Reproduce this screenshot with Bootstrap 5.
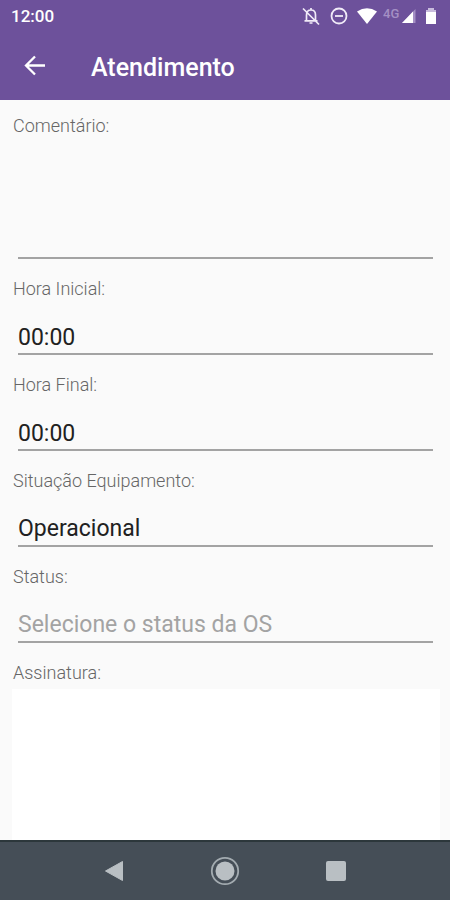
<!DOCTYPE html>
<html lang="pt-BR">
<head>
<meta charset="utf-8">
<meta name="viewport" content="width=device-width, initial-scale=1">
<title>Atendimento</title>
<link href="https://cdn.jsdelivr.net/npm/bootstrap@5.3.0/dist/css/bootstrap.min.css" rel="stylesheet">
<style>
body { font-family: Roboto, "Liberation Sans", sans-serif; background: #fafafa; color: #212121; }
.top-area { background: #6d519b; color: #fff; }
.status-bar { height: 32px; padding: 0 14px 0 11px; font-size: 17px; line-height: 32px; font-weight: 500; }
.status-icons { gap: 6px; }
.icon-set { gap: 9px; }
.app-bar { height: 68px; padding: 0 23px; gap: 44px; }
.app-title { font-size: 25px; line-height: 32px; font-weight: 500; padding-top: 3px; }
.form-area { padding: 14px 10px 0 12px; }
.field { margin-bottom: 18px; }
.field-label { font-size: 18px; line-height: 24px; font-weight: 300; color: #666; padding-left: 1px; }
.line-input, .line-input:focus {
  height: 54px; padding: 20px 0 0; font-size: 23px; line-height: 32px; color: #212121;
  background: transparent; border: 0; border-bottom: 2px solid #a3a3a3; border-radius: 0; box-shadow: none;
}
.line-wrap { padding: 0 7px 0 6px; }
textarea.line-input, textarea.line-input:focus { height: 121px; resize: none; }
select.line-input:invalid { color: #a3a3a3; }
.signature { background: #fff; margin-top: 4px; min-height: 151px; }
.nav-area { height: 60px; background: #454e57; border-top: 2px solid #2c373b; padding: 0 61px; }
</style>
<script src="https://cdn.jsdelivr.net/npm/bootstrap@5.3.0/dist/js/bootstrap.bundle.min.js"></script>
</head>
<body>
<div class="d-flex flex-column min-vh-100">
  <header class="top-area">
    <div class="status-bar d-flex justify-content-between align-items-center">
      <span>12:00</span>
      <div class="status-icons d-flex align-items-center">
        <div class="icon-set d-flex align-items-center">
          <svg width="20" height="20" viewBox="0 0 20 20" fill="none" stroke="#f1ebf8" stroke-width="1.7" aria-hidden="true">
            <path d="M5.500 14.500V9c0-3 1.700-5 4.500-5s4.500 2 4.500 5v5.500M3.500 14.800h13M10 2v2M8.500 17h3M2 2.500l16 16"/>
          </svg>
          <svg width="18" height="18" viewBox="0 0 18 18" fill="none" stroke="#f1ebf8" stroke-width="1.800" aria-hidden="true">
            <circle cx="9" cy="9" r="7.500"/><path d="M5 9h8"/>
          </svg>
          <svg width="20" height="16" viewBox="0 0 20 16" fill="#fff" aria-hidden="true">
            <path d="M0 3.500Q10-3 20 3.500L10 16z"/>
          </svg>
        </div>
        <div class="icon-set d-flex align-items-center">
          <div class="d-flex align-items-center">
            <svg width="18" height="18" viewBox="0 0 18 18" aria-hidden="true"><text x="0" y="11" font-size="13" fill="#a48fc4">4G</text></svg>
            <svg width="16" height="18" viewBox="0 0 16 18" aria-hidden="true">
              <path d="M14.500 2v14H1z" fill="#a48fc4"/><path d="M12 4.500V16H1z" fill="#fff"/>
            </svg>
          </div>
          <svg width="10" height="16" viewBox="0 0 10 16" aria-hidden="true">
            <path d="M2 0h6v2h2v14H0V2h2z" fill="#fff"/><path d="M2 0h6v2h2v2H0V2h2z" fill="#c9bcdd"/>
          </svg>
        </div>
      </div>
    </div>
    <div class="app-bar d-flex align-items-center">
      <button type="button" class="btn p-0 border-0 d-flex" aria-label="Voltar">
        <svg width="24" height="24" viewBox="0 0 24 24" fill="none" stroke="#fff" stroke-width="2.300"><path d="M22 11.500H3.500M12 2.500l-9 9 9 9"/></svg>
      </button>
      <h1 class="app-title mb-0">Atendimento</h1>
    </div>
  </header>

  <main class="form-area flex-grow-1 d-flex flex-column">
    <div class="field">
      <label class="field-label d-block" for="comentario">Comentário:</label>
      <div class="line-wrap"><textarea id="comentario" class="form-control line-input"></textarea></div>
    </div>
    <div class="field">
      <label class="field-label d-block" for="inicial">Hora Inicial:</label>
      <div class="line-wrap"><input type="text" id="inicial" class="form-control line-input" value="00:00"></div>
    </div>
    <div class="field">
      <label class="field-label d-block" for="final">Hora Final:</label>
      <div class="line-wrap"><input type="text" id="final" class="form-control line-input" value="00:00"></div>
    </div>
    <div class="field">
      <label class="field-label d-block" for="situacao">Situação Equipamento:</label>
      <div class="line-wrap"><select id="situacao" class="form-control line-input"><option>Operacional</option></select></div>
    </div>
    <div class="field">
      <label class="field-label d-block" for="status">Status:</label>
      <div class="line-wrap"><select id="status" class="form-control line-input" required><option value="">Selecione o status da OS</option></select></div>
    </div>
    <span class="field-label" id="assinatura">Assinatura:</span>
    <div class="signature flex-grow-1" role="img" aria-labelledby="assinatura"></div>
  </main>

  <nav class="nav-area d-flex justify-content-around align-items-center" aria-label="Sistema">
    <button type="button" class="btn p-0 border-0 d-flex" aria-label="Voltar">
      <svg width="20" height="22" viewBox="0 0 20 22" fill="#b9bfc3" stroke="#b9bfc3" stroke-linejoin="round"><path d="M1.500 11L18.500 1.500v19z"/></svg>
    </button>
    <button type="button" class="btn p-0 border-0 d-flex" aria-label="Início">
      <svg width="30" height="30" viewBox="0 0 30 30"><circle cx="15" cy="15" r="13.200" fill="none" stroke="#a3abb0" stroke-width="1.800"/><circle cx="15" cy="15" r="9.500" fill="#b9bfc3"/></svg>
    </button>
    <button type="button" class="btn p-0 border-0 d-flex" aria-label="Recentes">
      <svg width="20" height="20" viewBox="0 0 20 20"><rect width="20" height="20" rx="2" fill="#b9bfc3"/></svg>
    </button>
  </nav>
</div>
</body>
</html>
